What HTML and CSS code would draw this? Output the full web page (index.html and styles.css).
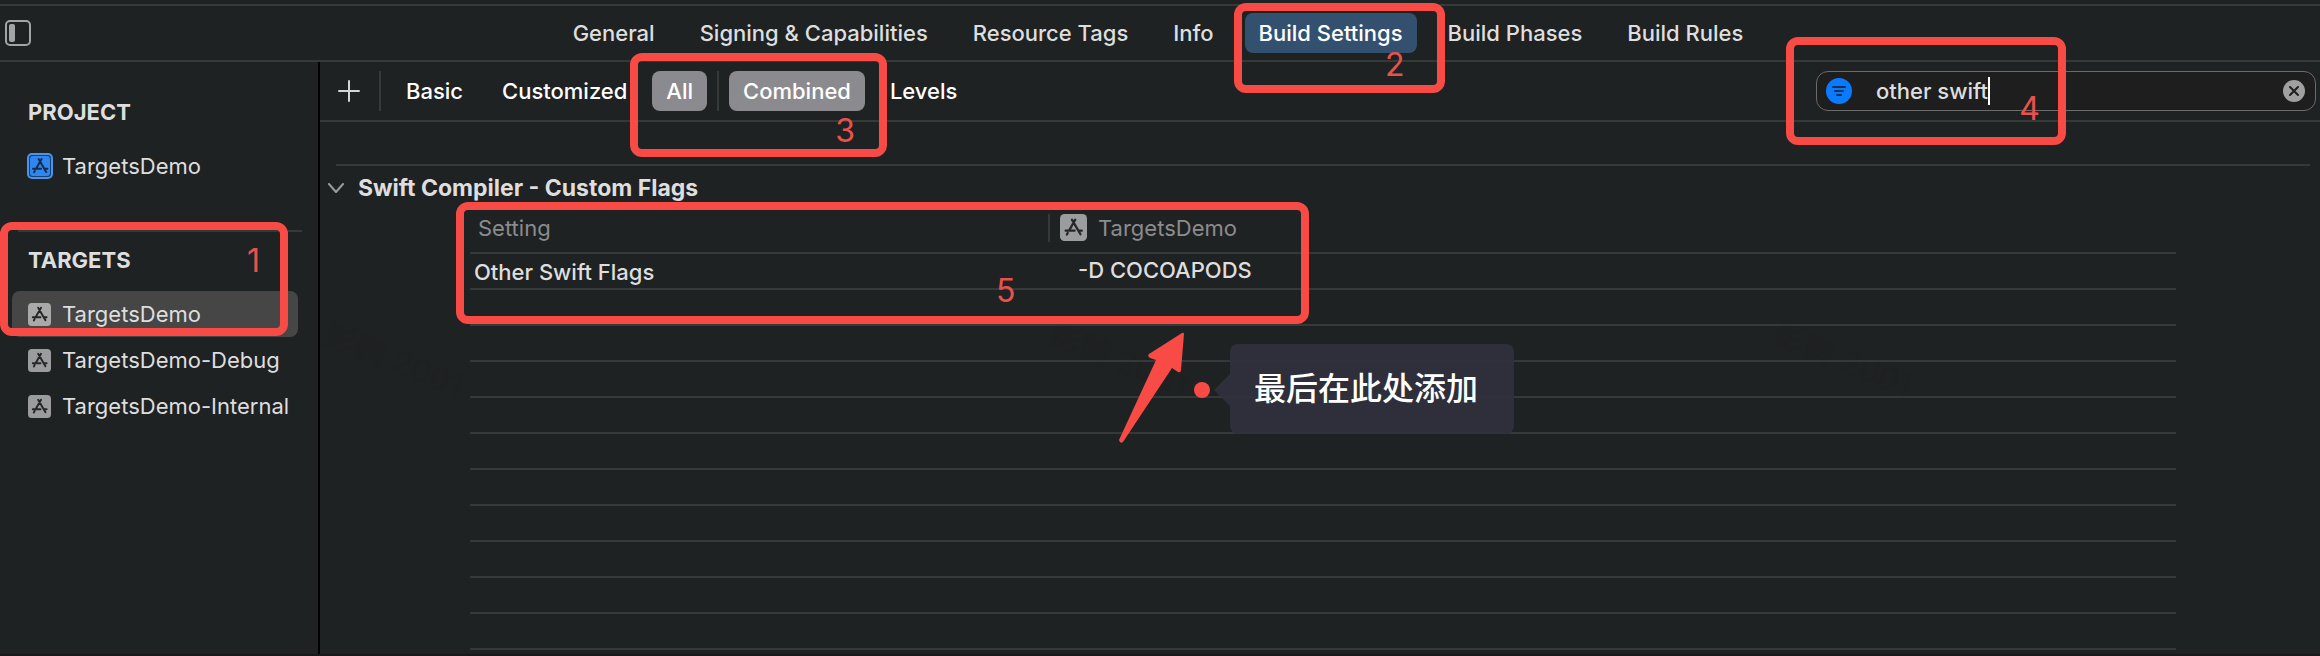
FILE: index.html
```html
<!DOCTYPE html>
<html lang="en">
<head>
<meta charset="utf-8">
<title>TargetsDemo – Build Settings</title>
<link rel="stylesheet" href="styles.css">
</head>
<body>
<svg width="0" height="0" class="defs" aria-hidden="true">
  <symbol id="glyph" viewBox="0 0 24 24">
    <g fill="none" stroke="currentColor" stroke-width="2" stroke-linecap="round">
      <path d="M13.600 5L8.200 14.400M10.600 5L18.200 18M5 14.800h8M16.800 14.800h2.600M6.900 16.800l-.8 1.400"/>
    </g>
  </symbol>
</svg>
<div class="window">
  <header class="topbar">
    <button class="panel-toggle" aria-label="Toggle sidebar">
      <svg width="26" height="26" viewBox="0 0 26 26"><rect x="1" y="1" width="24" height="24" rx="4" fill="none" stroke="#a3a4a4" stroke-width="2"/><rect x="4" y="4" width="6" height="18" rx="2" fill="#a3a4a4"/></svg>
    </button>
    <nav class="tabs">
      <button class="tab">General</button>
      <button class="tab">Signing &amp; Capabilities</button>
      <button class="tab">Resource Tags</button>
      <button class="tab">Info</button>
      <div class="anchor">
        <button class="tab tab-active">Build Settings</button>
        <div class="mark mark-tab"><span>2</span></div>
      </div>
      <button class="tab">Build Phases</button>
      <button class="tab">Build Rules</button>
    </nav>
  </header>

  <div class="body">
    <aside class="sidebar">
      <h2 class="side-title">PROJECT</h2>
      <a class="item" href="#project">
        <svg class="app-icon project-icon" viewBox="0 0 26 26"><rect x="1" y="1" width="24" height="24" rx="4" fill="#173f70" stroke="#4a94ea" stroke-width="2"/><rect x="3" y="3" width="20" height="20" rx="3" fill="#2f86f0"/><use href="#glyph" x="1" y="1" width="24" height="24"/></svg>
        TargetsDemo
      </a>
      <hr class="side-rule">
      <h2 class="side-title targets-title">TARGETS</h2>
      <ul class="targets">
        <li><a class="item item-selected" href="#app"><svg class="app-icon" viewBox="0 0 24 24"><rect width="24" height="24" rx="4" fill="#a9a9a9"/><use href="#glyph" width="24" height="24"/></svg>TargetsDemo</a></li>
        <li><a class="item" href="#debug"><svg class="app-icon" viewBox="0 0 24 24"><rect width="24" height="24" rx="4" fill="#9a9c9d"/><use href="#glyph" width="24" height="24"/></svg>TargetsDemo-Debug</a></li>
        <li><a class="item" href="#internal"><svg class="app-icon" viewBox="0 0 24 24"><rect width="24" height="24" rx="4" fill="#9a9c9d"/><use href="#glyph" width="24" height="24"/></svg>TargetsDemo-Internal</a></li>
      </ul>
      <div class="mark mark-targets"><span>1</span></div>
    </aside>

    <main class="content">
      <div class="watermarks" aria-hidden="true" lang="zh-CN">
        <span>彭鹤 2001</span>
        <span>彭鹤 2001</span>
        <span>彭鹤 2001</span>
      </div>
      <div class="filterbar">
        <button class="add" aria-label="Add build setting">
          <svg width="22" height="22" viewBox="0 0 22 22"><path d="M11 1v20M1 11h20" stroke="#d4d5d5" stroke-width="2" stroke-linecap="round"/></svg>
        </button>
        <span class="divider"></span>
        <button class="filter">Basic</button>
        <button class="filter">Customized</button>
        <div class="anchor filter-pair">
          <button class="filter filter-on">All</button>
          <span class="divider"></span>
          <button class="filter filter-on">Combined</button>
          <div class="mark mark-filters"><span>3</span></div>
        </div>
        <button class="filter">Levels</button>
        <div class="search">
          <svg width="26" height="26" viewBox="0 0 26 26"><circle cx="13" cy="13" r="13" fill="#0a7aff"/><path d="M7 9h12M9 13h8M11 17h4" stroke="#12315c" stroke-width="2" stroke-linecap="round"/></svg>
          <div class="query">
            <input type="text" value="other swift" aria-label="Filter build settings">
            <span class="caret"></span>
          </div>
          <button class="clear" aria-label="Clear filter">
            <svg width="22" height="22" viewBox="0 0 22 22"><circle cx="11" cy="11" r="11" fill="#a0a0a0"/><path d="M7 7l8 8M15 7l-8 8" stroke="#1e1e1e" stroke-width="2" stroke-linecap="round"/></svg>
          </button>
          <div class="mark mark-search"><span>4</span></div>
        </div>
      </div>

      <section class="group">
        <h3 class="group-title">
          <svg width="16" height="10" viewBox="0 0 16 10"><path d="M1 1l7 8 7-8" fill="none" stroke="#9b9c9c" stroke-width="2" stroke-linecap="round" stroke-linejoin="round"/></svg>
          Swift Compiler - Custom Flags
        </h3>
        <div class="sheet">
          <table class="settings">
            <thead>
              <tr>
                <th class="name">Setting</th>
                <th><div class="target"><svg viewBox="0 0 24 24" class="target-icon"><rect width="24" height="24" rx="4" fill="#9a9c9d"/><use href="#glyph" width="24" height="24"/></svg>TargetsDemo</div></th>
              </tr>
            </thead>
            <tbody>
              <tr><td class="name">Other Swift Flags</td><td class="value">-D COCOAPODS</td></tr>
              <tr><td></td><td></td></tr>
              <tr><td></td><td></td></tr>
              <tr><td></td><td></td></tr>
              <tr><td></td><td></td></tr>
              <tr><td></td><td></td></tr>
              <tr><td></td><td></td></tr>
              <tr><td></td><td></td></tr>
              <tr><td></td><td></td></tr>
              <tr><td></td><td></td></tr>
              <tr><td></td><td></td></tr>
            </tbody>
          </table>
          <div class="mark mark-table"><span>5</span></div>
          <svg class="arrow" width="68" height="114" viewBox="0 0 68 114"><path d="M65 3L32 24Q30 26 33 28L39 30L2 110Q3 114 6 112L55 38L61 42Q64 43 64 40L67 4Q67 2 65 3Z" fill="#f84b46"/></svg>
          <span class="dot"></span>
          <div class="tip" lang="zh-CN">最后在此处添加</div>
        </div>
      </section>
    </main>
  </div>
</div>
</body>
</html>
```
FILE: styles.css
```css
* {
  box-sizing: border-box;
}

body {
  margin: 0;
  background: #1f2223;
  color: #dededf;
  font: 500 22px/28px Inter, "Noto Sans CJK SC", sans-serif;
}

h2, h3, ul {
  margin: 0;
  padding: 0;
  font-size: 22px;
  list-style: none;
}

button {
  padding: 0;
  border: 0;
  background: none;
  color: inherit;
  font: inherit;
  white-space: nowrap;
}

svg {
  display: block;
  flex: none;
}

.defs {
  position: absolute;
}

.window {
  display: flex;
  flex-direction: column;
  min-height: 100vh;
  padding-top: 4px;
  border-bottom: 2px solid #19191b;
}

.anchor {
  position: relative;
}

/* Tab bar */
.topbar {
  display: grid;
  grid-template-columns: 1fr auto 1fr;
  align-items: center;
  height: 58px;
  padding: 0 9px 0 5px;
  border-top: 2px solid #363939;
  border-bottom: 2px solid #363939;
}

.panel-toggle {
  justify-self: start;
}

.tabs {
  display: flex;
  gap: 17px;
}

.tab {
  height: 40px;
  padding: 0 14px;
  border-radius: 8px;
}

.tab-active {
  background: #34506f;
  color: #fff;
}

.body {
  display: flex;
  flex: 1;
}

/* Sidebar */
.sidebar {
  position: relative;
  flex: none;
  width: 320px;
  padding: 36px 20px 0 12px;
  border-right: 2px solid #000;
}

.side-title {
  padding-left: 16px;
  font-weight: 700;
}

.item {
  display: flex;
  align-items: center;
  gap: 11px;
  height: 46px;
  padding-left: 16px;
  border-radius: 8px;
  color: inherit;
  font-weight: 400;
  text-decoration: none;
  white-space: nowrap;
}

.side-title + .item {
  margin-top: 17px;
}

.item-selected {
  background: #464646;
}

.app-icon {
  width: 23px;
  height: 23px;
  color: #242628;
}

.project-icon {
  width: 26px;
  height: 26px;
  margin: 0 -2px 0 -1px;
  color: #142c4c;
}

.side-rule {
  height: 2px;
  margin: 41px -4px 0 6px;
  border: 0;
  background: #363939;
}

.targets-title {
  margin: 14px 0 17px;
}

/* Filter bar */
.filterbar {
  display: flex;
  align-items: center;
  gap: 11px;
  height: 60px;
  padding: 0 4px 0 18px;
  border-bottom: 2px solid #363939;
}

.add {
  margin-right: 8px;
}

.divider {
  width: 2px;
  height: 40px;
  background: #363939;
}

.filter {
  height: 40px;
  padding: 0 14px;
  border-radius: 8px;
  color: #fff;
}

.filter-on {
  background: #8b8a8f;
}

.filter-pair {
  display: flex;
  gap: 10px;
}

.search {
  position: relative;
  display: flex;
  align-items: center;
  width: 500px;
  height: 40px;
  margin-left: auto;
  padding: 0 10px 0 9px;
  border: 1px solid #6b6b6b;
  border-radius: 12px;
  background: #1e1e1e;
}

.query {
  display: flex;
  flex: 1;
  align-items: center;
  padding-left: 24px;
}

.query input {
  field-sizing: content;
  padding: 0;
  border: 0;
  outline: 0;
  background: none;
  color: inherit;
  font: inherit;
}

.caret {
  width: 2px;
  height: 28px;
  background: #fff;
}

/* Settings */
.content {
  position: relative;
  flex: 1;
  min-width: 0;
}

.watermarks {
  position: absolute;
  top: 278px;
  left: 0;
  right: 404px;
  display: flex;
  justify-content: space-between;
  color: #1e2021;
  font-size: 32px;
  line-height: 40px;
}

.watermarks span {
  transform: rotate(22deg);
}

.group {
  margin: 42px 10px 0 16px;
  border-top: 2px solid #363939;
}

.group-title {
  display: flex;
  align-items: center;
  gap: 14px;
  height: 37px;
  margin-left: -8px;
  padding-top: 7px;
  font-size: 23px;
  font-weight: 700;
}

.sheet {
  position: relative;
  margin: 0 134px;
}

.settings {
  width: 100%;
  border-collapse: collapse;
  table-layout: fixed;
}

.settings th,
.settings td {
  height: 36px;
  padding: 0;
  border-bottom: 2px solid #363939;
  text-align: left;
}

.settings th {
  height: 50px;
  color: #8b8c8d;
  font-weight: 400;
}

.settings th.name {
  width: 578px;
  padding-left: 8px;
}

.settings td.name {
  padding: 2px 0 0 4px;
}

.settings td.value {
  padding: 0 0 2px 30px;
}

.target {
  display: flex;
  align-items: center;
  gap: 11px;
  padding-left: 10px;
  border-left: 2px solid #363939;
}

.target-icon {
  width: 27px;
  height: 27px;
  color: #242628;
}

/* Annotations */
.mark {
  position: absolute;
  z-index: 1;
  border: 8px solid #f84b46;
  border-radius: 12px;
  color: #e9524c;
  font-size: 32px;
  font-weight: 400;
  line-height: 32px;
  pointer-events: none;
}

.mark span {
  position: absolute;
}

.mark-targets {
  top: 160px;
  left: 0;
  width: 288px;
  height: 114px;
}

.mark-targets span {
  top: 15px;
  right: 20px;
}

.mark-tab {
  top: -10px;
  left: -11px;
  right: -28px;
  height: 90px;
}

.mark-tab span {
  top: 38px;
  right: 32px;
}

.mark-filters {
  top: -18px;
  left: -22px;
  right: -22px;
  height: 104px;
}

.mark-filters span {
  right: 24px;
  bottom: 2px;
}

.mark-search {
  top: -35px;
  left: -31px;
  width: 280px;
  height: 108px;
}

.mark-search span {
  right: 18px;
  bottom: 12px;
}

.mark-table {
  top: -1px;
  left: -14px;
  width: 853px;
  height: 122px;
}

.mark-table span {
  top: 65px;
  left: 532px;
}

.arrow {
  position: absolute;
  top: 127px;
  left: 647px;
}

.dot {
  position: absolute;
  top: 179px;
  left: 724px;
  width: 16px;
  height: 16px;
  border-radius: 50%;
  background: #f84b46;
}

.tip {
  position: absolute;
  top: 141px;
  left: 760px;
  padding: 0 36px 0 24px;
  border-radius: 8px;
  background: #2f303df2;
  color: #fff;
  font-size: 32px;
  line-height: 90px;
  white-space: nowrap;
}

.tip::before {
  content: "";
  position: absolute;
  top: 30px;
  left: -16px;
  border: solid transparent;
  border-width: 16px 16px 16px 0;
  border-right-color: #2f303df2;
}
```
